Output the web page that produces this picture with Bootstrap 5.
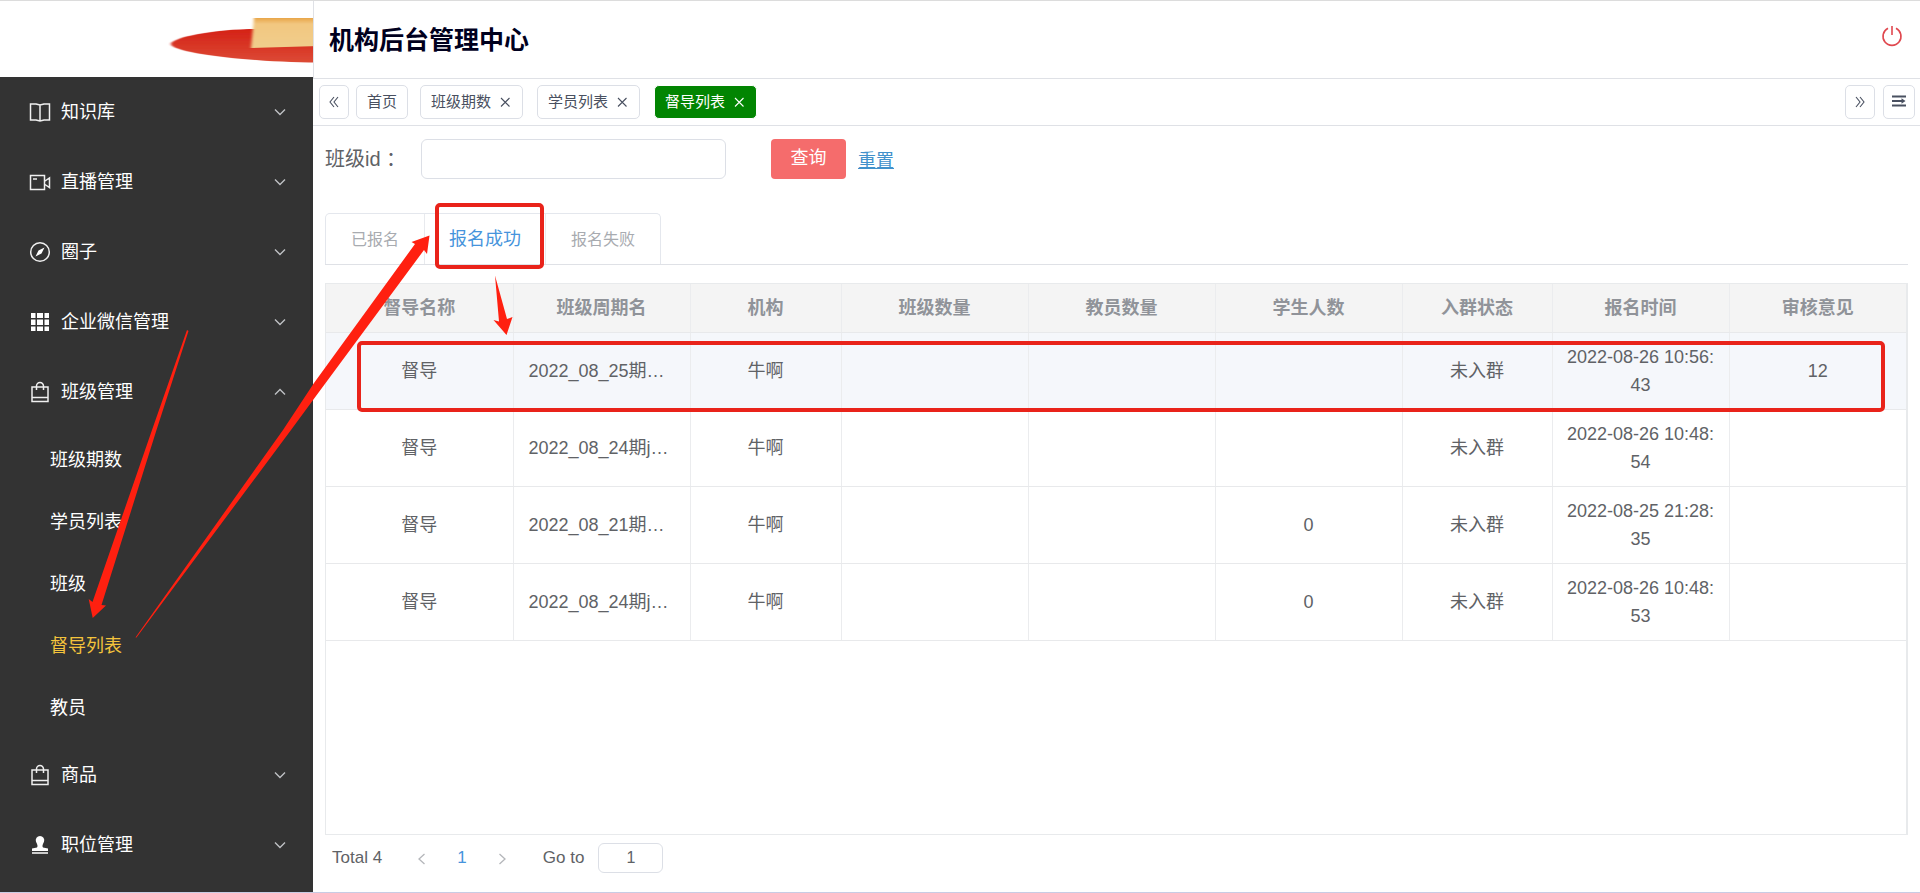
<!DOCTYPE html>
<html lang="zh-CN">
<head>
<meta charset="utf-8">
<meta name="viewport" content="width=device-width, initial-scale=1">
<title>机构后台管理中心</title>
<link href="https://cdn.jsdelivr.net/npm/bootstrap@5.3.0/dist/css/bootstrap.min.css" rel="stylesheet">
<style>
  body { font-family: "Liberation Sans", "Noto Sans CJK SC", sans-serif; font-size: 18px; line-height: 28px; color: #606266; background: #fff; }
  .app { border-top: 1px solid #dcdcdc; border-bottom: 1px solid #c8cce4; }
  .line { border-color: #dfe1e6 !important; }

  /* sidebar */
  .sidebar { width: 313px; background: #333; }
  .brand { height: 76px; background: #fff; }
  .menu-item { height: 70px; padding: 0 25px 0 29px; gap: 10px; color: #fff; background: none; border: 0; }
  .menu-item .arrow { width: 16px; height: 16px; margin-left: auto; fill: none; stroke: #bfc1c4; stroke-width: 1.4; }
  .menu-icon { width: 22px; height: 22px; fill: none; stroke: #f0f0f0; stroke-width: 1.5; }
  .submenu { padding: 2px 0 1px; }
  .submenu a { height: 62px; padding-left: 50px; color: #fff; text-decoration: none; }
  .submenu a.active { color: #f4c43c; }

  /* header and opened pages */
  .topbar { height: 78px; padding: 0 16px 0 15px; }
  .topbar h1 { font-size: 25px; line-height: 32px; color: #00001e; }
  .power { height: 70px; width: 24px; }
  .pages { height: 47px; padding: 0 5px 0 6px; font-size: 15px; line-height: 20px; }
  .page-tab { height: 34px; border: 1px solid #dcdfe6; border-radius: 5px; background: #fff; color: #495060; padding: 0 10px 1px; gap: 7px; }
  .page-tab svg { fill: none; stroke: currentColor; stroke-width: 1.1; }
  .page-tab.current { background: #028502; border-color: #fff; color: #fff; }
  .tab-set { gap: 14px; margin-left: 7px; }
  .tab-set .home { margin-right: -2px; }
  .w-30 { width: 30px; } .w-32 { width: 32px; }

  /* filter */
  .filter { padding-top: 13px; }
  .filter label { width: 96px; font-size: 20px; }
  .filter input { width: 305px; height: 40px; border-color: #dcdfe6; }
  .btn-query { width: 75px; height: 40px; padding: 0 0 2px; margin-left: 45px; font-size: 18px; background: #f56c6c; color: #fff; border: 0; border-radius: 4px; }
  .reset { color: #4191cb; margin-left: 12px; padding-top: 3px; }

  /* status tabs */
  .content { padding: 0 12px; }
  .status { margin-top: 34px; }
  .status-tabs { border: 1px solid #e4e7ed; border-bottom: 0; border-radius: 5px 5px 0 0; }
  .status-tabs button { height: 50px; border: 0; background: none; color: #a8abb0; font-size: 16px; padding: 2px 25px 0; }
  .status-tabs button + button { border-left: 1px solid #e8eaee; }
  .status-tabs button.active { color: #4694dc; font-size: 18px; padding: 0 24px; }

  /* data grid */
  .grid-box { margin-top: 18px; border: 1px solid #e8eaec; border-right-width: 2px; }
  .grid { table-layout: fixed; }
  .grid th, .grid td { border-right: 1px solid #ebecee; border-bottom: 1px solid #e8e9eb; text-align: center; vertical-align: middle; }
  .grid th:last-child, .grid td:last-child { border-right: 0; }
  .grid th { height: 48px; background: #f4f4f4; color: #909399; }
  .grid td { height: 77px; padding: 0 12px; word-break: break-all; }
  .grid td.term { padding: 0 0 0 15px; text-align: left; white-space: nowrap; }
  .grid tr.hovered td { background: #f5f7fb; }

  /* pager */
  .pager { height: 57px; padding: 0 7px 11px; font-size: 17px; }
  .pager button { border: 0; background: none; width: 40px; padding: 0; color: #4694dc; }
  .pager svg { fill: none; stroke: #b4b6ba; stroke-width: 1.3; }
  .pager input { width: 65px; height: 30px; font-size: 16px; color: #606266; border-color: #dcdfe6; margin-left: 14px; }

  /* red guide marks */
  .frame { border: 4px solid #e9231a; border-radius: 5px; pointer-events: none; }
  .frame-tab { inset: -11px 1px -5px 10px; }
  .frame-row { left: 31px; right: 21px; top: 57px; height: 71px; }
  .guides { left: 0; top: 0; pointer-events: none; fill: #ff2010; z-index: 5; }
</style>
</head>
<body>
<div class="app d-flex min-vh-100 position-relative">

  <aside class="sidebar flex-shrink-0 d-flex flex-column">
    <div class="brand d-flex justify-content-end">
      <svg width="153" height="76" viewBox="160 1 153 76" role="img" aria-label="logo">
        <defs>
          <linearGradient id="red" x1="0" y1="0" x2="0" y2="1"><stop offset="0" stop-color="#d42015"/><stop offset="1" stop-color="#dc4a35"/></linearGradient>
          <linearGradient id="gold" x1="0" y1="0" x2="0" y2="1"><stop offset="0" stop-color="#e8a548"/><stop offset=".2" stop-color="#f2c780"/><stop offset="1" stop-color="#f0cd8c"/></linearGradient>
          <filter id="soft" x="-10%" y="-10%" width="120%" height="120%"><feGaussianBlur stdDeviation="1.8 .4"/></filter>
        </defs>
        <path filter="url(#soft)" fill="url(#red)" d="M171 44C171 38 212 29 257 29L320 28V62.500C240 62 171 52 171 44Z"/>
        <path filter="url(#soft)" fill="url(#gold)" d="M254 18H320V46L251 48Z"/>
      </svg>
    </div>
    <nav class="d-flex flex-column" aria-label="菜单">
      <button class="menu-item d-flex align-items-center"><svg class="menu-icon" viewBox="0 0 22 22"><path d="M11 4L7 3H1.500V19H7L11 20L15 19H20.500V3H15ZM11 4V20"/></svg>知识库<svg class="arrow" viewBox="0 0 16 16"><path d="M3 5.500L8 10.500L13 5.500"/></svg></button>
      <button class="menu-item d-flex align-items-center"><svg class="menu-icon" viewBox="0 0 22 22"><path d="M1.500 4.500H15.500V18.500H1.500ZM4 8H8M16 10L20.500 7V16.500L16 13.500"/></svg>直播管理<svg class="arrow" viewBox="0 0 16 16"><path d="M3 5.500L8 10.500L13 5.500"/></svg></button>
      <button class="menu-item d-flex align-items-center"><svg class="menu-icon" viewBox="0 0 22 22"><circle cx="11" cy="11" r="9.300"/><path d="M15.500 6.500L12.500 12.500L6.500 15.500L9.500 9.500Z" fill="#fff" stroke="none"/></svg>圈子<svg class="arrow" viewBox="0 0 16 16"><path d="M3 5.500L8 10.500L13 5.500"/></svg></button>
      <button class="menu-item d-flex align-items-center"><svg class="menu-icon" viewBox="0 0 22 22"><path fill="#fff" stroke="none" d="M2 2H6.500V7H2ZM8 2H14V7H8ZM15.500 2H20V7H15.500ZM2 8.500H6.500V14H2ZM8 8.500H14V14H8ZM15.500 8.500H20V14H15.500ZM2 15.500H6.500V20H2ZM8 15.500H14V20H8ZM15.500 15.500H20V20H15.500Z"/></svg>企业微信管理<svg class="arrow" viewBox="0 0 16 16"><path d="M3 5.500L8 10.500L13 5.500"/></svg></button>
      <button class="menu-item d-flex align-items-center" aria-expanded="true"><svg class="menu-icon" viewBox="0 0 22 22"><path d="M3 6H19V20.500H3ZM3 16.500H19M7.500 9V5A3.500 3.500 0 0 1 14.500 5V9"/></svg>班级管理<svg class="arrow" viewBox="0 0 16 16"><path d="M3 10.500L8 5.500L13 10.500"/></svg></button>
      <div class="submenu d-flex flex-column">
        <a class="d-flex align-items-center" href="#">班级期数</a>
        <a class="d-flex align-items-center" href="#">学员列表</a>
        <a class="d-flex align-items-center" href="#">班级</a>
        <a class="d-flex align-items-center active" href="#">督导列表</a>
        <a class="d-flex align-items-center" href="#">教员</a>
      </div>
      <button class="menu-item d-flex align-items-center"><svg class="menu-icon" viewBox="0 0 22 22"><path d="M3 6H19V20.500H3ZM3 16.500H19M7.500 9V5A3.500 3.500 0 0 1 14.500 5V9"/></svg>商品<svg class="arrow" viewBox="0 0 16 16"><path d="M3 5.500L8 10.500L13 5.500"/></svg></button>
      <button class="menu-item d-flex align-items-center"><svg class="menu-icon" viewBox="0 0 22 22"><path fill="#fff" stroke="none" d="M11 2A4.300 4.300 0 0 1 15 7.800C13.500 10.500 13 12.500 14 13.500L19 14.500V17H3V14.500L8 13.500C9 12.500 8.500 10.500 7 7.800A4.300 4.300 0 0 1 11 2ZM3 18.300H19V19.800H3Z"/></svg>职位管理<svg class="arrow" viewBox="0 0 16 16"><path d="M3 5.500L8 10.500L13 5.500"/></svg></button>
    </nav>
  </aside>

  <main class="flex-grow-1 d-flex flex-column" style="min-width:0">
    <header class="topbar d-flex align-items-center justify-content-between border-bottom border-start line">
      <h1 class="fw-bold m-0">机构后台管理中心</h1>
      <button class="power btn p-0 border-0 d-flex align-items-center align-self-start" aria-label="退出"><svg width="24" height="24" viewBox="0 0 24 24" fill="none" stroke="#e0484f" stroke-width="1.600"><path d="M8 4.300A9 9 0 1 0 16 4.300M12 2V11"/></svg></button>
    </header>

    <div class="pages d-flex align-items-center border-bottom line">
      <button class="page-tab w-30 p-0 d-flex align-items-center justify-content-center" aria-label="向左"><svg width="14" height="14" viewBox="0 0 14 14"><path d="M7 2L3 7L7 12M11 2L7 7L11 12"/></svg></button>
      <div class="tab-set d-flex align-items-center">
        <button class="page-tab home">首页</button>
        <button class="page-tab d-flex align-items-center">班级期数<svg width="14" height="14" viewBox="0 0 14 14"><path d="M3 3L11.500 11.500M11.500 3L3 11.500"/></svg></button>
        <button class="page-tab d-flex align-items-center">学员列表<svg width="14" height="14" viewBox="0 0 14 14"><path d="M3 3L11.500 11.500M11.500 3L3 11.500"/></svg></button>
        <button class="page-tab current d-flex align-items-center">督导列表<svg width="14" height="14" viewBox="0 0 14 14"><path d="M3 3L11.500 11.500M11.500 3L3 11.500"/></svg></button>
      </div>
      <div class="d-flex gap-2 ms-auto">
        <button class="page-tab w-30 p-0 d-flex align-items-center justify-content-center" aria-label="向右"><svg width="14" height="14" viewBox="0 0 14 14"><path d="M3 2L7 7L3 12M7 2L11 7L7 12"/></svg></button>
        <button class="page-tab w-32 p-0 d-flex align-items-center justify-content-center" aria-label="更多"><svg width="16" height="16" viewBox="0 0 16 16"><path d="M1 2.500H15M1 7H11M1 11.500H15" stroke-width="2"/><path d="M10.500 4.300L14.500 7L10.500 9.700Z" fill="#495060" stroke="none"/></svg></button>
      </div>
    </div>

    <div class="content flex-grow-1 d-flex flex-column">
      <form class="filter d-flex align-items-center">
        <label for="classId">班级id ：</label>
        <input id="classId" type="text" class="form-control">
        <button type="button" class="btn btn-query">查询</button>
        <a class="reset" href="#">重置</a>
      </form>

      <div class="status d-flex border-bottom line">
        <div class="status-tabs d-flex" role="tablist">
          <button role="tab">已报名</button>
          <button role="tab" class="active position-relative" aria-selected="true">报名成功<span class="frame frame-tab position-absolute"></span></button>
          <button role="tab">报名失败</button>
        </div>
      </div>

      <div class="grid-box flex-grow-1 position-relative">
        <table class="grid w-100">
          <colgroup><col style="width:187px"><col style="width:177px"><col style="width:151px"><col style="width:187px"><col style="width:187px"><col style="width:187px"><col style="width:150px"><col style="width:177px"><col style="width:177px"></colgroup>
          <thead>
            <tr><th>督导名称</th><th>班级周期名</th><th>机构</th><th>班级数量</th><th>教员数量</th><th>学生人数</th><th>入群状态</th><th>报名时间</th><th>审核意见</th></tr>
          </thead>
          <tbody>
            <tr class="hovered"><td>督导</td><td class="term">2022_08_25期…</td><td>牛啊</td><td></td><td></td><td></td><td>未入群</td><td>2022-08-26 10:56:43</td><td>12</td></tr>
            <tr><td>督导</td><td class="term">2022_08_24期j…</td><td>牛啊</td><td></td><td></td><td></td><td>未入群</td><td>2022-08-26 10:48:54</td><td></td></tr>
            <tr><td>督导</td><td class="term">2022_08_21期…</td><td>牛啊</td><td></td><td></td><td>0</td><td>未入群</td><td>2022-08-25 21:28:35</td><td></td></tr>
            <tr><td>督导</td><td class="term">2022_08_24期j…</td><td>牛啊</td><td></td><td></td><td>0</td><td>未入群</td><td>2022-08-26 10:48:53</td><td></td></tr>
          </tbody>
        </table>
        <span class="frame frame-row position-absolute"></span>
      </div>

      <div class="pager d-flex align-items-center">
        <span class="me-3">Total 4</span>
        <button class="ms-1" aria-label="上一页"><svg width="14" height="14" viewBox="0 0 14 14"><path d="M9.500 2L4 7L9.500 12"/></svg></button>
        <button>1</button>
        <button aria-label="下一页"><svg width="14" height="14" viewBox="0 0 14 14"><path d="M4.500 2L10 7L4.500 12"/></svg></button>
        <label for="goto" class="ms-3">&nbsp;Go to</label>
        <input id="goto" type="text" class="form-control text-center p-0" value="1">
      </div>
    </div>
  </main>

  <svg class="guides position-absolute" width="560" height="660" viewBox="0 1 560 660" aria-hidden="true">
    <path d="M187 330L188.500 331L156.500 430L101.500 605L106 605.500L92.700 618L88.700 599L92.500 602L152 430Z"/>
    <path d="M135.500 637.500L283 430L314 383L415 244L411.500 242L429.500 235.500L427 254L424 250L316 396L291 430L136.500 637.500Z"/>
    <path d="M495 275.500L507 319L512.500 317L506.500 335L493.500 320L499 321.500Z"/>
  </svg>
</div>
<script src="https://cdn.jsdelivr.net/npm/bootstrap@5.3.0/dist/js/bootstrap.bundle.min.js"></script>
</body>
</html>
